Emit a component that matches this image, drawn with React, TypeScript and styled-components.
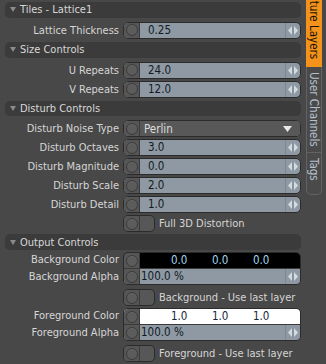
import React from "react";
import styled, { createGlobalStyle } from "styled-components";

const GlobalStyle = createGlobalStyle`
  html, body {
    margin: 0;
    padding: 0;
    background: #484848;
  }
  body {
    font-family: "DejaVu Sans Condensed", "Liberation Sans", Arial, sans-serif;
    font-stretch: condensed;
    font-size: 11px;
  }
`;

const Frame = styled.div`
  display: flex;
  width: 326px;
  height: 364px;
  overflow: hidden;
  background: #484848;
`;

const Panel = styled.div`
  width: 301px;
  box-sizing: border-box;
  padding: 1px 0 0 5px;
  display: flex;
  flex-direction: column;
`;

const Header = styled.div<{ $tight?: boolean }>`
  height: 16px;
  margin: ${(p) => (p.$tight ? "0 0 2px" : "1px 0 4px")};
  border-radius: 5px;
  background: #3b3b3b;
  display: flex;
  align-items: center;
  gap: 4px;
  padding-left: 5px;
  color: #d8d8d8;
`;

const Row = styled.div`
  display: grid;
  grid-template-columns: 114px 178px;
  column-gap: 4px;
  margin-bottom: 2px;
`;

const Label = styled.div<{ $lh?: number }>`
  text-align: right;
  color: #d6d6d6;
  line-height: ${(p) => p.$lh ?? 17}px;
  white-space: nowrap;
`;

const Labels = styled.div`
  display: flex;
  flex-direction: column;
`;

const Field = styled.div`
  display: flex;
  height: 17px;
  box-sizing: border-box;
  border: 1px solid #2b2b2b;
  border-radius: 5px;
  overflow: hidden;
  background: #8e99a3;
`;

const KnobCell = styled.div`
  width: 15px;
  flex: none;
  background: #565656;
  border-right: 1px solid #3a3a3a;
  display: flex;
  align-items: center;
  justify-content: center;
`;

const Knob = styled.span`
  width: 10px;
  height: 10px;
  border-radius: 50%;
  border: 1px solid #3b3b3b;
  background: #5c5c5c;
  box-shadow: inset 0 1px 0 #686868;
`;

const Value = styled.div<{ $pad?: number }>`
  flex: 1;
  padding-left: ${(p) => p.$pad ?? 8}px;
  color: #121a24;
  font-size: 11.5px;
  line-height: 15px;
  white-space: nowrap;
`;

const Spinner = styled.div`
  width: 14px;
  flex: none;
  border-left: 1px solid #7b868f;
  display: flex;
  align-items: center;
  justify-content: center;
`;

const Select = styled.div`
  flex: 1;
  display: flex;
  align-items: center;
  justify-content: space-between;
  padding: 0 8px 0 4px;
  background: #585858;
  color: #dcdcdc;
  font-size: 11.5px;
`;

const ColorGroup = styled.div`
  display: flex;
  flex-direction: column;
  border: 1px solid #2b2b2b;
  border-radius: 5px;
  overflow: hidden;
  margin-bottom: 2px;
`;

const GroupLine = styled.div<{ $bg: string; $h: number }>`
  display: flex;
  height: ${(p) => p.$h}px;
  box-sizing: border-box;
  background: ${(p) => p.$bg};
  & + & {
    border-top: 1px solid #3a3a3a;
  }
`;

const Swatch = styled.div<{ $dark: boolean }>`
  flex: 1;
  display: flex;
  padding-left: 31px;
  color: ${(p) => (p.$dark ? "#a3d6ef" : "#16243a")};
  font-size: 11.5px;
  line-height: 15px;
`;

const Channel = styled.span`
  width: 41px;
`;

const CheckWrap = styled.div`
  display: flex;
  align-items: center;
  gap: 4px;
  height: 17px;
`;

const CheckBox = styled.div`
  width: 32px;
  height: 17px;
  box-sizing: border-box;
  border: 1px solid #2b2b2b;
  border-radius: 5px;
  overflow: hidden;
  display: flex;
  background: #575757;
`;

const CheckLabel = styled.span`
  color: #d6d6d6;
  white-space: nowrap;
`;

const TabColumn = styled.div`
  width: 25px;
  box-sizing: border-box;
  padding-left: 5px;
  display: flex;
  flex-direction: column;
`;

const Tab = styled.div<{ $h: number; $active?: boolean; $last?: boolean; $end?: boolean }>`
  width: 16px;
  height: ${(p) => p.$h}px;
  box-sizing: border-box;
  overflow: hidden;
  display: flex;
  flex-direction: column;
  justify-content: ${(p) => (p.$end ? "flex-end" : "flex-start")};
  align-items: center;
  padding: ${(p) => (p.$end ? "0 0 8px" : "5px 0 0")};
  background: ${(p) => (p.$active ? "#f3931b" : "#4a4a4a")};
  color: ${(p) => (p.$active ? "#1a1208" : "#b4c0cd")};
  border: ${(p) => (p.$active ? "none" : "1px solid #636363")};
  border-top: none;
  border-radius: ${(p) => (p.$last ? "0 0 5px 5px" : "0")};
  font-size: 11.5px;
`;

const TabText = styled.span`
  writing-mode: vertical-rl;
  flex: none;
  white-space: nowrap;
`;

const Triangle = () => (
  <svg width="6" height="5" viewBox="0 0 6 5">
    <polygon points="0,0 6,0 3,5" fill="#8a8a8a" />
  </svg>
);

const Arrows = () => (
  <svg width="10" height="9" viewBox="0 0 10 9">
    <polygon points="4,0 4,9 0,4.5" fill="#d3dbe1" />
    <polygon points="6,0 6,9 10,4.5" fill="#d3dbe1" />
    <rect x="4.6" y="0" width="0.8" height="9" fill="#7b868f" />
  </svg>
);

const SectionHeader: React.FC<{ title: string; tight?: boolean }> = ({ title, tight }) => (
  <Header $tight={tight}>
    <Triangle />
    {title}
  </Header>
);

const NumberRow: React.FC<{ label: string; value: string }> = ({ label, value }) => (
  <Row>
    <Label>{label}</Label>
    <Field>
      <KnobCell>
        <Knob />
      </KnobCell>
      <Value>{value}</Value>
      <Spinner>
        <Arrows />
      </Spinner>
    </Field>
  </Row>
);

const CheckRow: React.FC<{ label: string }> = ({ label }) => (
  <Row>
    <span />
    <CheckWrap>
      <CheckBox>
        <KnobCell>
          <Knob />
        </KnobCell>
      </CheckBox>
      <CheckLabel>{label}</CheckLabel>
    </CheckWrap>
  </Row>
);

const ColorRow: React.FC<{ name: string; dark: boolean; value: string }> = ({ name, dark, value }) => (
  <Row>
    <Labels>
      <Label $lh={16}>{name} Color</Label>
      <Label $lh={17}>{name} Alpha</Label>
    </Labels>
    <ColorGroup>
      <GroupLine $bg={dark ? "#000" : "#fff"} $h={15}>
        <KnobCell>
          <Knob />
        </KnobCell>
        <Swatch $dark={dark}>
          <Channel>{value}</Channel>
          <Channel>{value}</Channel>
          <Channel>{value}</Channel>
        </Swatch>
      </GroupLine>
      <GroupLine $bg="#8e99a3" $h={16}>
        <KnobCell>
          <Knob />
        </KnobCell>
        <Value $pad={1}>100.0 %</Value>
        <Spinner>
          <Arrows />
        </Spinner>
      </GroupLine>
    </ColorGroup>
  </Row>
);

const App: React.FC = () => (
  <Frame>
    <GlobalStyle />
    <Panel>
      <SectionHeader title="Tiles - Lattice1" />
      <NumberRow label="Lattice Thickness" value="0.25" />
      <SectionHeader title="Size Controls" />
      <NumberRow label="U Repeats" value="24.0" />
      <NumberRow label="V Repeats" value="12.0" />
      <SectionHeader title="Disturb Controls" />
      <Row>
        <Label>Disturb Noise Type</Label>
        <Field>
          <KnobCell>
            <Knob />
          </KnobCell>
          <Select>
            Perlin
            <svg width="9" height="6" viewBox="0 0 9 6">
              <polygon points="0,0 9,0 4.5,6" fill="#e8e8e8" />
            </svg>
          </Select>
        </Field>
      </Row>
      <NumberRow label="Disturb Octaves" value="3.0" />
      <NumberRow label="Disturb Magnitude" value="0.0" />
      <NumberRow label="Disturb Scale" value="2.0" />
      <NumberRow label="Disturb Detail" value="1.0" />
      <CheckRow label="Full 3D Distortion" />
      <SectionHeader title="Output Controls" tight />
      <ColorRow name="Background" dark value="0.0" />
      <CheckRow label="Background - Use last layer" />
      <ColorRow name="Foreground" dark={false} value="1.0" />
      <CheckRow label="Foreground - Use last layer" />
    </Panel>
    <TabColumn>
      <Tab $h={67} $active $end>
        <TabText>Texture Layers</TabText>
      </Tab>
      <Tab $h={86}>
        <TabText>User Channels</TabText>
      </Tab>
      <Tab $h={42} $last>
        <TabText>Tags</TabText>
      </Tab>
    </TabColumn>
  </Frame>
);

export default App;
